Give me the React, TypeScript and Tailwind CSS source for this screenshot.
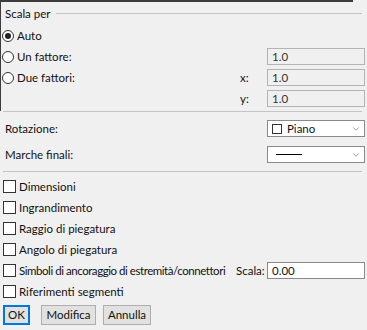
import React from 'react';
import { ChevronDown } from 'lucide-react';

const Radio: React.FC<{ checked?: boolean; label: string }> = ({ checked, label }) => (
  <div className="flex items-center gap-[3px]">
    <span className="w-[12px] h-[12px] rounded-full border border-[#333333] bg-white flex items-center justify-center">
      {checked && <span className="w-[6px] h-[6px] rounded-full bg-[#222222]" />}
    </span>
    <span>{label}</span>
  </div>
);

const Check: React.FC<{ label: string; tight?: boolean }> = ({ label, tight }) => (
  <div className="flex items-center gap-[3px] whitespace-nowrap">
    <span className="w-[13px] h-[13px] border border-[#333333] bg-white" />
    <span className={tight ? 'tracking-[-0.45px]' : ''}>{label}</span>
  </div>
);

const Field: React.FC<{ value: string; disabled?: boolean }> = ({ value, disabled }) => (
  <div
    className={
      'w-[98px] h-[17px] shrink-0 border flex items-center pl-[4px] ' +
      (disabled ? 'bg-[#f0f0f0] border-[#b4b4b4] text-[#333333]' : 'bg-white border-[#8a8a8a]')
    }
  >
    {value}
  </div>
);

const Separator = () => <div className="h-px bg-[#c4c4c4] ml-[3px] mr-[5px]" />;

export default function App() {
  return (
    <div
      className="w-[367px] h-[330px] bg-[#f0f0f0] text-[11.5px] text-[#111111] leading-none overflow-hidden"
      style={{ fontFamily: 'Lato, "Noto Sans", sans-serif' }}
    >
      {/* window edge */}
      <div className="h-[2px] w-[353px] bg-[#3c3c3c]" />

      {/* Scala per */}
      <div className="border-l border-[#3c3c3c] h-[109px] flex flex-col">
        <div className="h-[23px] flex items-center gap-[5px] pl-[4px] pr-[5px]">
          <span>Scala per</span>
          <div className="flex-1 h-px bg-[#c4c4c4]" />
        </div>
        <div className="h-[21px] flex items-center pl-[1px]">
          <Radio checked label="Auto" />
        </div>
        <div className="h-[21px] flex items-center justify-between pl-[1px] pr-[2px]">
          <Radio label="Un fattore:" />
          <Field value="1.0" disabled />
        </div>
        <div className="h-[21px] flex items-center pl-[1px] pr-[2px]">
          <div className="flex-1">
            <Radio label="Due fattori:" />
          </div>
          <span className="w-[27px]">x:</span>
          <Field value="1.0" disabled />
        </div>
        <div className="h-[21px] flex items-center justify-end pr-[2px]">
          <span className="w-[27px]">y:</span>
          <Field value="1.0" disabled />
        </div>
      </div>
      <Separator />

      {/* Rotazione / Marche finali */}
      <div className="flex flex-col pl-[5px] pr-[2px] pt-[8px] gap-[9px]">
        <div className="h-[17px] flex items-center justify-between">
          <span>Rotazione:</span>
          <div className="w-[98px] h-[17px] bg-white border border-[#8a8a8a] flex items-center pl-[4px] pr-[3px]">
            <span className="w-[10px] h-[10px] border border-[#333333] mr-[5px]" />
            <span className="flex-1">Piano</span>
            <ChevronDown size={10} strokeWidth={1.5} className="text-[#666666]" />
          </div>
        </div>
        <div className="h-[17px] flex items-center justify-between">
          <span>Marche finali:</span>
          <div className="w-[98px] h-[17px] bg-white border border-[#8a8a8a] flex items-center pl-[8px] pr-[3px]">
            <span className="flex-1">
              <span className="block w-[26px] h-px bg-black" />
            </span>
            <ChevronDown size={10} strokeWidth={1.5} className="text-[#666666]" />
          </div>
        </div>
      </div>
      <div className="h-[8px]" />
      <Separator />

      {/* options */}
      <div className="flex flex-col pl-[3px] pr-[2px] pt-[4px]">
        <div className="h-[21px] flex items-center">
          <Check label="Dimensioni" />
        </div>
        <div className="h-[21px] flex items-center">
          <Check label="Ingrandimento" />
        </div>
        <div className="h-[21px] flex items-center">
          <Check label="Raggio di piegatura" />
        </div>
        <div className="h-[21px] flex items-center">
          <Check label="Angolo di piegatura" />
        </div>
        <div className="h-[21px] flex items-center">
          <div className="flex-1 min-w-0">
            <Check label="Simboli di ancoraggio di estremità/connettori" tight />
          </div>
          <span className="w-[31px] shrink-0">Scala:</span>
          <Field value="0.00" />
        </div>
        <div className="h-[21px] flex items-center">
          <Check label="Riferimenti segmenti" />
        </div>
      </div>

      {/* buttons */}
      <div className="flex gap-[9px] pl-[3px] pt-[3px]">
        <button className="w-[27px] h-[20px] bg-[#e1e1e1] border-2 border-[#0078d7] flex items-center justify-center">
          OK
        </button>
        <button className="w-[55px] h-[20px] bg-[#e1e1e1] border border-[#adadad] flex items-center justify-center ml-[2px]">
          Modifica
        </button>
        <button className="w-[48px] h-[20px] bg-[#e1e1e1] border border-[#adadad] flex items-center justify-center -ml-[2px]">
          Annulla
        </button>
      </div>
    </div>
  );
}
